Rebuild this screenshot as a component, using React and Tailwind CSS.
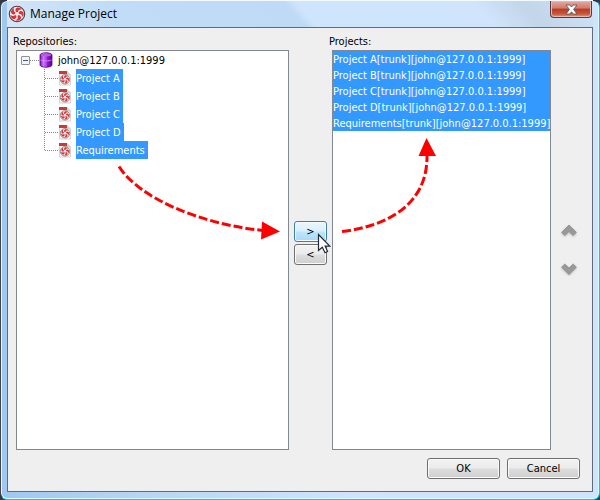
import React from "react";

const projects = ["Project A", "Project B", "Project C", "Project D", "Requirements"];
const host = "john@127.0.0.1:1999";
const blades = [0, 72, 144, 216, 288];

function Swirl({ className }) {
  return (
    <svg viewBox="0 0 18 18" className={className} aria-hidden="true">
      <circle cx="9" cy="9" r="7.7" fill="#f8eded" stroke="#4d3f44" strokeWidth="1.1" />
      {blades.map((a) => (
        <path
          key={a}
          d="M8.3 7.2C6.8 5.4 7.2 3.4 9.2 2.6C11.2 2.3 12.9 3.2 13.8 4.6C11.8 4.2 9.9 5 9.9 7.1Z"
          fill="#d8343b"
          transform={`rotate(${a} 9 9)`}
        />
      ))}
      <circle cx="9" cy="9" r="1.3" fill="#fbeaea" />
    </svg>
  );
}

function ProjectIcon() {
  return (
    <svg viewBox="0 0 13 16" className="h-4 w-[13px] shrink-0" aria-hidden="true">
      <path d="M1.500 1.500H9L12.500 5V15H1.500Z" fill="#f4f4f4" stroke="#d4d4d4" />
      <path d="M9 1.500V5H12.500Z" fill="#ddd" stroke="#bbb" strokeWidth=".5" />
      <rect x="1" y="1" width="8" height="3" fill="#c93a3a" />
      <circle cx="7" cy="9.300" r="4.700" fill="#faeeee" stroke="#8d8080" strokeWidth=".9" />
      {blades.map((a) => (
        <path
          key={a}
          d="M6.600 8.200C5.700 7.100 5.900 5.900 7.100 5.400C8.300 5.200 9.400 5.800 9.900 6.600C8.700 6.400 7.500 6.800 7.500 8.100Z"
          fill="#d3343a"
          transform={`rotate(${a} 7 9.3)`}
        />
      ))}
    </svg>
  );
}

function Repository() {
  return (
    <svg viewBox="0 0 14 16" className="h-4 w-[14px] shrink-0" aria-hidden="true">
      <defs>
        <linearGradient id="repo">
          <stop offset="0" stopColor="#7512a8" />
          <stop offset=".3" stopColor="#d27bff" />
          <stop offset=".55" stopColor="#9a20df" />
          <stop offset="1" stopColor="#5c008f" />
        </linearGradient>
      </defs>
      <path d="M1 3C1 0 13 0 13 3V13C13 16 1 16 1 13Z" fill="url(#repo)" stroke="#5c0a87" strokeWidth=".8" />
      <ellipse cx="7" cy="2.8" rx="5.3" ry="1.6" fill="#b85be6" />
      <path d="M1.5 8C3 9.2 11 9.2 12.5 8" fill="none" stroke="#dda7ff" strokeWidth=".8" />
      <path d="M7 4V15" stroke="#c46bf5" strokeWidth=".7" />
    </svg>
  );
}

function Chevron({ down }) {
  return (
    <svg viewBox="0 0 18 14" className="h-[14px] w-[18px]" aria-hidden="true">
      <path
        d={down ? "M9 12.5L1.6 5.2L4.8 2L9 6L13.2 2L16.4 5.2Z" : "M9 1L16.4 8.3L13.2 11.5L9 7.5L4.8 11.5L1.6 8.3Z"}
        fill="#999"
        stroke="#888"
        strokeWidth=".7"
        className="drop-shadow-[0_1px_1px_#bbb]"
      />
    </svg>
  );
}

const face =
  "flex items-center justify-center rounded-[3px] border border-[#707070] bg-[linear-gradient(#f3f3f3_0%,#ebebeb_48%,#dddddd_52%,#cfcfcf_100%)] shadow-[inset_0_0_0_1px_#fafafa]";
const hotFace =
  "flex items-center justify-center rounded-[3px] border border-[#3c7fb1] bg-[linear-gradient(#eaf6fd_0%,#d9f0fc_48%,#bee6fd_52%,#a7d9f5_100%)] shadow-[inset_0_0_0_1px_#f5fbfe]";

export default function App() {
  return (
    <div className="bg-[#333a45] font-['DejaVu_Sans_Condensed','DejaVu_Sans',sans-serif] text-[11px] leading-4 text-black">
      <div className="flex h-screen flex-col rounded-[7px] border border-t-[#30303b] border-r-[#00cdf5] border-b-[#00cdf5] border-l-[#3e4654] bg-[linear-gradient(90deg,#9fc8ef_0%,#b9d6f4_25%,#d0e5fc_60%,#cfe3fa_100%)] px-[6px] pb-[7px] shadow-[inset_0_0_0_1px_#e8f5ff]">
        <header className="flex h-[26px] shrink-0 items-start justify-between bg-[linear-gradient(48deg,#d5e6f8_0%,#c0dcf6_20%,#bfdaf5_49%,#cfe5fd_51%,#d0e5fc_80%,#c3d5e8_88%,#cfe3fa_100%)] shadow-[0_-1px_#f3faff]">
          <h1 className="flex items-center gap-1 pt-1 pl-px font-['Open_Sans',sans-serif] text-[12px] leading-[18px]">
            <Swirl className="h-[18px] w-[18px]" />
            Manage Project
          </h1>
          <button
            type="button"
            aria-label="Close"
            className="mr-px flex h-[17px] w-[42px] items-center justify-center rounded-b-[4px] border border-t-0 border-[#533b45] bg-[linear-gradient(#e5aaa0_0%,#d17a6c_45%,#b83a25_50%,#c9553a_80%,#dd9a83_100%)] shadow-[inset_0_0_0_1px_#e6b9ae]"
          >
            <svg viewBox="0 0 13 11" className="h-[11px] w-[13px]" aria-hidden="true">
              <path d="M1 1H4.8L6.5 3L8.2 1H12L8.6 5.4L12 10H8.2L6.5 7.8L4.8 10H1L4.4 5.4Z" fill="#fff" stroke="#5e5960" strokeWidth=".9" />
            </svg>
          </button>
        </header>

        <main className="relative flex min-h-0 flex-1 flex-col border border-[#5d6b7a] bg-[#efefef] pt-[6px] pb-3">
          <div className="flex min-h-0 flex-1 pl-2">
            <section className="flex min-w-0 flex-[273] flex-col">
              <h2 id="repos" className="-ml-[3px]">Repositories:</h2>
              <div aria-labelledby="repos" className="flex-1 border border-[#828790] bg-white pl-1">
                <div className="flex h-[18px] items-center">
                  <button type="button" aria-label="Collapse" className="flex h-[9px] w-[9px] items-center justify-center rounded-[1px] border border-[#919191] bg-[#f5f5f5]">
                    <span className="h-px w-[5px] bg-[#3059a8]" />
                  </button>
                  <span className="h-px w-[9px] bg-[repeating-linear-gradient(90deg,#888_0px_1px,transparent_1px_2px)]" />
                  <Repository />
                  <span className="pt-px pl-[5px]">{host}</span>
                </div>
                <ul className="pl-[23px]">
                  {projects.map((name, i) => (
                    <li key={name} className="flex h-[18px] items-center">
                      <svg className="h-[18px] w-[14px] shrink-0" aria-hidden="true">
                        <path d={i === 4 ? "M.5 0V9M1 9.5H14" : "M.5 0V18M1 9.5H14"} fill="none" stroke="#888" strokeDasharray="1 1" />
                      </svg>
                      <ProjectIcon />
                      <span className="ml-[5px] h-[18px] bg-[#3399ff] pt-[2px] pr-[3px] text-white">{name}</span>
                    </li>
                  ))}
                </ul>
              </div>
            </section>

            <div className="flex w-[43px] shrink-0 flex-col items-center gap-[2px] pt-[187px]">
              <button type="button" className={`${hotFace} h-[21px] w-[33px]`}>&gt;</button>
              <button type="button" className={`${face} h-[21px] w-[33px]`}>&lt;</button>
            </div>

            <section className="flex min-w-0 flex-[219] flex-col">
              <h2 id="projects" className="-ml-[3px]">Projects:</h2>
              <ul aria-labelledby="projects" className="flex-1 border border-[#828790] bg-white">
                {projects.map((name) => (
                  <li key={name} className="h-4 bg-[#3399ff] pt-px whitespace-nowrap text-white">
                    {name}[trunk][{host}]
                  </li>
                ))}
              </ul>
            </section>

            <div className="flex w-[41px] shrink-0 flex-col items-center gap-6 pt-[190px] pr-[5px]">
              <button type="button" aria-label="Move up"><Chevron /></button>
              <button type="button" aria-label="Move down"><Chevron down /></button>
            </div>
          </div>

          <footer className="flex shrink-0 justify-end gap-[7px] pt-2 pr-3">
            <button type="button" className={`${face} h-[21px] w-[73px]`}>OK</button>
            <button type="button" className={`${face} h-[21px] w-[73px]`}>Cancel</button>
          </footer>

          <svg viewBox="8 28 584 463" className="pointer-events-none absolute inset-0 h-full w-full" aria-hidden="true">
            <g fill="none" stroke="#f00" strokeWidth="3" strokeDasharray="9 3">
              <path d="M119 166.5C139 198 200 224 263 230.5" />
              <path d="M342 231.5C388 226 428 204 427 155" />
            </g>
            <path d="M262 221.5L280 231.5L261 239.5ZM426.5 138L418.5 156H436Z" fill="#f00" />
            <path d="M318.5 234.5V250.5L322.3 247.2L325 252.7L327.6 251.5L325.2 246.2H329.8Z" fill="#fff" stroke="#222938" strokeWidth="1.2" />
          </svg>
        </main>
      </div>
    </div>
  );
}
